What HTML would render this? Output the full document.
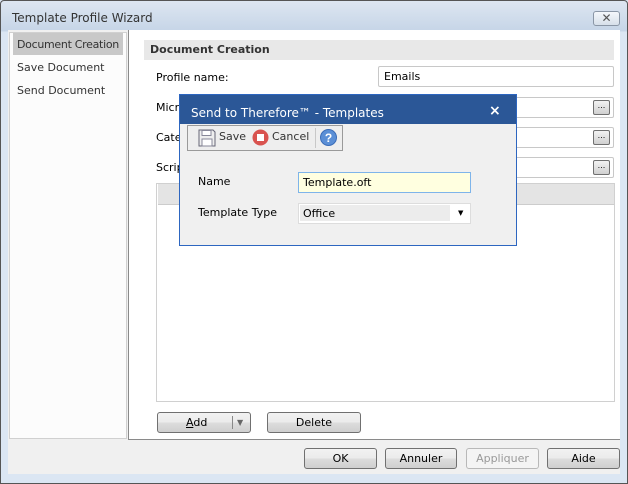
<!DOCTYPE html>
<html><head><style>
*{box-sizing:border-box;margin:0;padding:0}
body{width:628px;height:484px;position:relative;overflow:hidden;font-family:"DejaVu Sans","Liberation Sans",sans-serif;font-size:11px;color:#000;background:#dbe6f3}
.a{position:absolute}
.frame{left:0;top:0;width:628px;height:484px;border:1px solid #555;border-radius:4px 4px 0 0;background:linear-gradient(#dde6f1,#c6d5e7 30px,#dbe6f3 31px)}
.btn{position:absolute;height:21px;border:1px solid #707070;border-radius:3px;background:linear-gradient(#f2f2f2 0,#ebebeb 50%,#dddddd 51%,#cfcfcf);text-align:center;line-height:19px;font-size:11px}
.fld{position:absolute;border:1px solid #c8c8c8;border-radius:2px;background:#fff;height:21px}
.dots{position:absolute;right:3px;top:2px;width:17px;height:15px;border:1px solid #707070;border-radius:2px;background:linear-gradient(#f2f2f2,#d0d0d0);font-size:8px;line-height:9px;text-align:center}
</style></head><body>
<div class="a frame"></div>
<div class="a" style="left:12px;top:11px;font-size:12px;color:#333">Template Profile Wizard</div>
<div class="a" style="left:593px;top:11px;width:27px;height:15px;border:1px solid #8a96a6;border-radius:3px;background:linear-gradient(#f4f7fb,#d7e0ea);text-align:center;font-size:12px;line-height:13px;color:#555">✕</div>
<div class="a" style="left:8px;top:30px;width:612px;height:444px;background:#f0f0f0"></div>
<div class="a" style="left:9px;top:32px;width:118px;height:407px;background:#fcfcfc;border:1px solid #d0d0d0"></div>
<div class="a" style="left:13px;top:33px;width:110px;height:22px;background:#c8c8c8"></div>
<div class="a" style="left:17px;top:38px;color:#333;letter-spacing:-0.3px">Document Creation</div>
<div class="a" style="left:17px;top:61px;color:#333">Save Document</div>
<div class="a" style="left:17px;top:84px;color:#333">Send Document</div>
<div class="a" style="left:128px;top:30px;width:492px;height:410px;background:#fff;border-left:1px solid #8a8a8a;border-bottom:1px solid #8a8a8a"></div>
<div class="a" style="left:144px;top:40px;width:470px;height:20px;background:#e8e8e8"></div>
<div class="a" style="left:150px;top:43px;font-weight:bold;color:#333">Document Creation</div>
<div class="a" style="left:156px;top:71px">Profile name:</div>
<div class="fld" style="left:378px;top:66px;width:236px"><span class="a" style="left:5px;top:3px">Emails</span></div>
<div class="a" style="left:156px;top:101px">Micro</div>
<div class="a" style="left:156px;top:131px">Cate</div>
<div class="a" style="left:156px;top:161px">Scrip</div>
<div class="fld" style="left:378px;top:97px;width:236px"><div class="dots">...</div></div>
<div class="fld" style="left:378px;top:127px;width:236px"><div class="dots">...</div></div>
<div class="fld" style="left:378px;top:157px;width:236px"><div class="dots">...</div></div>
<div class="a" style="left:156px;top:183px;width:459px;height:219px;border:1px solid #d0d0d0;background:#fff"></div>
<div class="a" style="left:158px;top:184px;width:456px;height:21px;background:#e4e4e4;border-bottom:1px solid #ccc"></div>
<div class="btn" style="left:157px;top:412px;width:94px"><span style="position:absolute;left:28px"><u>A</u>dd</span><span style="position:absolute;left:74px;top:3px;height:13px;border-left:1px solid #888"></span><span style="position:absolute;left:79px;top:0;font-size:8px;color:#666">▼</span></div>
<div class="btn" style="left:267px;top:412px;width:94px">Delete</div>
<div class="btn" style="left:304px;top:448px;width:73px">OK</div>
<div class="btn" style="left:385px;top:448px;width:72px">Annuler</div>
<div class="btn" style="left:466px;top:448px;width:73px;border-color:#b8b8b8;background:#f4f4f4;color:#999">Appliquer</div>
<div class="btn" style="left:547px;top:448px;width:73px">Aide</div>
<!-- dialog -->
<div class="a" style="left:179px;top:94px;width:338px;height:152px;background:#f0f0f0;border:1px solid #2d66c0"></div>
<div class="a" style="left:180px;top:95px;width:336px;height:29px;background:#2b5797"></div>
<div class="a" style="left:191px;top:106px;color:#fff;font-size:12px">Send to Therefore™ - Templates</div>
<div class="a" style="left:489px;top:103px;color:#fff;font-size:14px;font-weight:bold">×</div>
<div class="a" style="left:187px;top:125px;width:156px;height:26px;border:1px solid #9a9a9a;background:#eee"></div>
<svg class="a" style="left:198px;top:129px" width="18" height="18" viewBox="0 0 18 18"><path d="M1 1h14l2 2v14H1z" fill="#eee" stroke="#667"/><rect x="4" y="1.5" width="9" height="5" fill="#fff" stroke="#889"/><rect x="4" y="10" width="10" height="7" fill="#fff" stroke="#889"/></svg>
<div class="a" style="left:219px;top:130px;color:#333">Save</div>
<svg class="a" style="left:252px;top:129px" width="17" height="17"><circle cx="8.5" cy="8.5" r="8" fill="#d9534f"/><rect x="5" y="5" width="7" height="7" fill="#fff"/></svg>
<div class="a" style="left:272px;top:130px;color:#333">Cancel</div>
<div class="a" style="left:315px;top:128px;height:20px;border-left:1px solid #c8c8c8"></div>
<svg class="a" style="left:320px;top:129px" width="17" height="17"><circle cx="8.5" cy="8.5" r="8" fill="#5b8fd6" stroke="#3a6cb8"/><text x="8.5" y="13" font-size="12" font-weight="bold" fill="#fff" text-anchor="middle" font-family="Liberation Sans">?</text></svg>
<div class="a" style="left:198px;top:175px">Name</div>
<div class="a" style="left:298px;top:172px;width:173px;height:21px;border:1px solid #7eb4ea;background:#ffffe0"></div>
<div class="a" style="left:303px;top:176px">Template.oft</div>
<div class="a" style="left:198px;top:206px">Template Type</div>
<div class="a" style="left:298px;top:203px;width:173px;height:21px;border:1px solid #ddd;background:#fff"></div>
<div class="a" style="left:300px;top:205px;width:150px;height:16px;background:#ececec"></div>
<div class="a" style="left:303px;top:207px">Office</div>
<div class="a" style="left:458px;top:209px;font-size:7px">▼</div>
</body></html>
